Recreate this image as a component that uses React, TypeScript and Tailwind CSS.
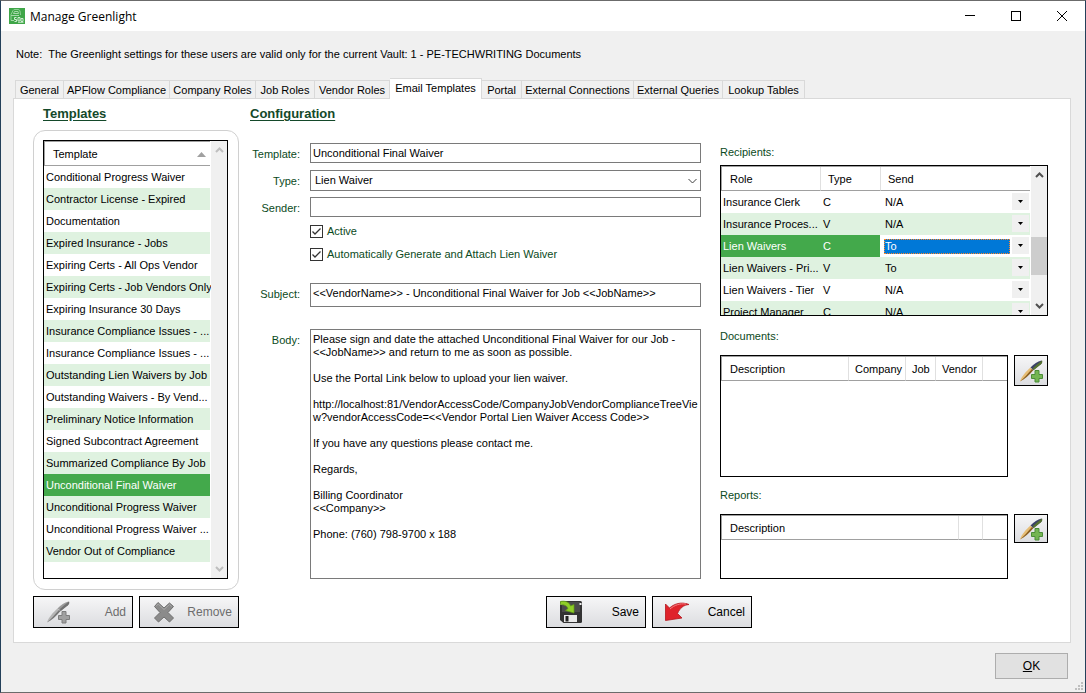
import { useState, type ReactNode } from "react";

const TABS = [
  { label: "General", width: "w-[49px]" },
  { label: "APFlow Compliance", width: "w-[106px]" },
  { label: "Company Roles", width: "w-[86px]" },
  { label: "Job Roles", width: "w-[59px]" },
  { label: "Vendor Roles", width: "w-[75px]" },
  { label: "Email Templates", width: "w-[92px]" },
  { label: "Portal", width: "w-[40px]" },
  { label: "External Connections", width: "w-[112px]" },
  { label: "External Queries", width: "w-[89px]" },
  { label: "Lookup Tables", width: "w-[82px]" },
];

const TEMPLATES = [
  "Conditional Progress Waiver",
  "Contractor License - Expired",
  "Documentation",
  "Expired Insurance - Jobs",
  "Expiring Certs - All Ops Vendor",
  "Expiring Certs - Job Vendors Only",
  "Expiring Insurance 30 Days",
  "Insurance Compliance Issues - ...",
  "Insurance Compliance Issues - ...",
  "Outstanding Lien Waivers by Job",
  "Outstanding Waivers - By Vend...",
  "Preliminary Notice Information",
  "Signed Subcontract Agreement",
  "Summarized Compliance By Job",
  "Unconditional Final Waiver",
  "Unconditional Progress Waiver",
  "Unconditional Progress Waiver ...",
  "Vendor Out of Compliance",
];

const RECIPIENTS = [
  { role: "Insurance Clerk", type: "C", send: "N/A" },
  { role: "Insurance Proces...", type: "V", send: "N/A" },
  { role: "Lien Waivers", type: "C", send: "To" },
  { role: "Lien Waivers - Pri...", type: "V", send: "To" },
  { role: "Lien Waivers - Tier", type: "V", send: "N/A" },
  { role: "Project Manager", type: "C", send: "N/A" },
];

const BODY = `Please sign and date the attached Unconditional Final Waiver for our Job -
<<JobName>> and return to me as soon as possible.

Use the Portal Link below to upload your lien waiver.

http://localhost:81/VendorAccessCode/CompanyJobVendorComplianceTreeView?vendorAccessCode=<<Vendor Portal Lien Waiver Access Code>>

If you have any questions please contact me.

Regards,

Billing Coordinator
<<Company>>

Phone: (760) 798-9700 x 188`;

function AppIcon() {
  return (
    <svg className="h-4 w-4" viewBox="0 0 16 16" fill="none">
      <rect width="16" height="16" fill="#3fa648" />
      <path d="M2 12.500V6.500L4 2.500Q4.500 1.500 6 1.500h3q1.500 0 2 1.500l.5 4" stroke="#8fd096" />
      <path d="M4.500 5.500h5l-.5-2H5.500zM2 7.500h8M2 12.500h3" stroke="#a6d9aa" />
      <path d="M7.500 9.500h-2v2h2v2h-2M9 9.500h2v3.500H9zM12 10.500h2v3h-2z" stroke="#cdebd0" />
      <path d="M9 14.500h5.500" stroke="#a6d9aa" />
    </svg>
  );
}

// Pen with a plus badge; the disabled version is drawn in greys
function PenPlusIcon({ muted = false }: { muted?: boolean }) {
  return (
    <svg className="h-6 w-6 shrink-0" viewBox="0 0 24 24">
      <path d="M1 22.500C2.500 17.500 7 12.500 11.500 8.500l2.500 2.500C9.500 15.500 5.500 20 1 22.500z" fill={muted ? "#b5b5b5" : "#e6bd75"} />
      <path d="M1 22.500C5 19 9 14.500 13 10l1.500 1C10 16 5.500 20.500 1 22.500z" fill={muted ? "#777777" : "#8a5f22"} />
      <path d="M11.500 8.500C15 4.800 18.500 2.500 22.500 1.500c1 1 .5 2.500-.5 3.500l-7.500 6z" fill={muted ? "#9a9a9a" : "#3b4166"} />
      <path d="M14 9C17 6 20 3.500 23 1.500c.8 1.200 0 2.700-1 3.700l-7.500 6z" fill={muted ? "#717171" : "#56722f"} />
      <path
        d="M16 11.500h4v4h3.500v4H20V23h-4v-3.500h-3.500v-4H16z"
        fill={muted ? "#a0a0a0" : "#74b552"}
        stroke={muted ? "#7d7d7d" : "#4b8d38"}
      />
    </svg>
  );
}

function RemoveIcon() {
  return (
    <svg className="h-6 w-6" viewBox="0 0 24 24">
      <path
        d="M2.500 6.500L6 2.500 12 8l5.500-5 4 3.500L16 12.500l5.500 5.500-4 4L12 17l-5.500 5-4-4L8 12.500z"
        fill="#8b8b8b"
        stroke="#6f6f6f"
        strokeLinejoin="round"
      />
      <path d="M4 6.300L6.200 4l5.800 5.500L17.500 4.500l2.300 2" stroke="#ababab" fill="none" />
    </svg>
  );
}

function SaveIcon() {
  return (
    <svg className="h-6 w-6" viewBox="0 0 24 24">
      <path d="M1 2.500Q1 1 2.500 1h19Q23 1 23 2.500v19q0 1.500-1.500 1.500h-17L1 20z" fill="#333333" />
      <path d="M3 2h18v10H3z" fill="#4b4b4b" />
      <path d="M1.500 3h2v2h-2zM20.500 3h2v2h-2z" fill="#eeeeee" />
      <path d="M5 15h13v7H5z" fill="#e9e9e9" />
      <path d="M6.500 16h3v5.500h-3z" fill="#222222" />
      <path d="M1.500 1.500C6 .5 10.500 2 11.500 6l3.500-1.500v8.500L6.500 10.500l2.500-2C8 5.500 5 4.500 1.500 4.500z" fill="#8fce28" stroke="#5f9c12" strokeWidth=".7" />
    </svg>
  );
}

function CancelIcon() {
  return (
    <svg className="h-6 w-6" viewBox="0 0 24 24">
      <path
        d="M.500 4l4 4C9 4 16 1.300 24 4.500 18.500 5 15 8 12.500 13.500l4.500 4.500L.500 20.500z"
        fill="#df232b"
        stroke="#b3161d"
        strokeWidth=".8"
        strokeLinejoin="round"
      />
      <path d="M5 9C9.500 5 15 3.200 21 4" stroke="#f58085" fill="none" />
    </svg>
  );
}

function Chevron({ up = false }: { up?: boolean }) {
  return (
    <svg width="9" height="6" viewBox="0 0 9 6" fill="none" stroke="currentColor" strokeWidth="2">
      <path d={up ? "M1 5l3.500-3.500L8 5" : "M1 1l3.500 3.500L8 1"} />
    </svg>
  );
}

function ScrollBar({ enabled = false }: { enabled?: boolean }) {
  const color = enabled ? "text-[#505050]" : "text-[#bfbfbf]";
  return (
    <div className="flex w-4 shrink-0 flex-col bg-[#f0f0f0]">
      <button type="button" aria-label="Scroll up" className={`flex h-[18px] items-center justify-center ${color}`}>
        <Chevron up />
      </button>
      <div className="flex-[54]" />
      {enabled && <div className="h-[38px] bg-[#cdcdcd]" />}
      <div className="flex-[23]" />
      <button type="button" aria-label="Scroll down" className={`flex h-[18px] items-center justify-center ${color}`}>
        <Chevron />
      </button>
    </div>
  );
}

function Th({ children, className = "" }: { children?: ReactNode; className?: string }) {
  return (
    <th
      scope="col"
      className={`h-6 border-b border-l border-b-[#a0a0a0] border-l-[#e0e0e0] bg-white p-0 pt-px text-left font-normal first:border-l-[#a0a0a0] ${className}`}
    >
      {children}
    </th>
  );
}

function BigButton({ icon, children, disabled = false }: { icon: ReactNode; children: ReactNode; disabled?: boolean }) {
  return (
    <button
      type="button"
      disabled={disabled}
      className="flex h-8 w-[100px] items-center justify-between border border-black bg-linear-to-b from-[#f6f6f7] to-[#dcdde0] pr-1.5 pl-3 text-[12px] disabled:text-[#6d6d6d]"
    >
      {icon}
      <span>{children}</span>
    </button>
  );
}

function FieldLabel({ htmlFor, children }: { htmlFor: string; children: ReactNode }) {
  return (
    <label htmlFor={htmlFor} className="w-[50px] shrink-0 pt-[5px] text-right text-[#0b4a22]">
      {children}
    </label>
  );
}

function Check({ label }: { label: string }) {
  return (
    <label className="flex items-center gap-1">
      <span className="relative h-[13px] w-[13px]">
        <input type="checkbox" defaultChecked className="peer block h-[13px] w-[13px] appearance-none border border-[#333333] bg-white" />
        <svg
          className="pointer-events-none absolute top-0 left-0 hidden peer-checked:block"
          width="13"
          height="13"
          fill="none"
          stroke="#333333"
          strokeWidth="1.300"
        >
          <path d="M2.500 6.500l2.500 2.500 5.500-5.500" />
        </svg>
      </span>
      {label}
    </label>
  );
}

function AddRowButton({ label, height }: { label: string; height: string }) {
  return (
    <button
      type="button"
      aria-label={label}
      className={`flex w-[34px] items-center justify-center border border-black bg-linear-to-b from-[#f6f6f7] to-[#dcdde0] ${height}`}
    >
      <PenPlusIcon />
    </button>
  );
}

export default function App() {
  const [tab, setTab] = useState("Email Templates");
  const [selected, setSelected] = useState(14);

  return (
    <div className="flex min-h-screen flex-col border border-[#6b6b6b] border-r-[#24405a] border-l-[#24405a] bg-[#f0f0f0] font-['Liberation_Sans',Arial,sans-serif] text-[11px] leading-[13px] text-black">
      <header className="flex h-[30px] items-center bg-white pl-2">
        <AppIcon />
        <h1 className="ml-[5px] flex-1 font-['Open_Sans','Noto_Sans',sans-serif] text-[12px]">Manage Greenlight</h1>
        <button type="button" aria-label="Minimize" className="flex h-full w-[46px] items-center justify-center">
          <svg width="10" height="10" stroke="currentColor">
            <path d="M0 4.500h10" />
          </svg>
        </button>
        <button type="button" aria-label="Maximize" className="flex h-full w-[46px] items-center justify-center">
          <svg width="10" height="10" fill="none" stroke="currentColor">
            <rect x=".5" y=".5" width="9" height="9" />
          </svg>
        </button>
        <button type="button" aria-label="Close" className="flex h-full w-[46px] items-center justify-center">
          <svg width="10" height="10" stroke="currentColor">
            <path d="M0 0l10 10M10 0L0 10" />
          </svg>
        </button>
      </header>

      <main className="flex flex-1 flex-col px-3">
        <p className="pt-[17px] pl-[3px]">
          Note:&nbsp; The Greenlight settings for these users are valid only for the current Vault: 1 - PE-TECHWRITING Documents
        </p>

        <div role="tablist" className="mt-[17px] flex h-5 items-end pl-0.5">
          {TABS.map(({ label, width }) => (
            <button
              key={label}
              type="button"
              role="tab"
              aria-selected={tab === label}
              onClick={() => setTab(label)}
              className={`shrink-0 border border-b-0 border-[#d9d9d9] whitespace-nowrap not-first:border-l-0 ${width} ${
                tab === label ? "z-10 -mb-px h-[21px] bg-white pb-px" : "h-[18px] pt-px"
              }`}
            >
              {label}
            </button>
          ))}
        </div>

        <section className="mr-0.5 flex flex-col border border-[#d9d9d9] bg-white pt-[7px] pr-[22px] pb-3.5 pl-[19px]">
          <div className="flex">
            <div className="w-[206px] shrink-0">
              <h2 className="pl-2.5 text-[13px] leading-[15px] font-bold text-[#14492a] underline underline-offset-2">Templates</h2>
              <div className="mt-[9px] h-[460px] rounded-[12px] border border-[#d0d0d0] p-[9px]">
                <div className="flex h-[439px] w-[185px] border border-black">
                  <div className="flex-1 border-r border-white">
                    <table className="w-full table-fixed border-separate border-spacing-0 border-t border-t-[#a0a0a0]">
                      <thead>
                        <tr>
                          <Th className="pr-1 pl-2">
                            <span className="flex items-center justify-between">
                              Template
                              <svg width="9" height="5" fill="#a0a0a0">
                                <path d="M0 5L4.500 0 9 5z" />
                              </svg>
                            </span>
                          </Th>
                        </tr>
                      </thead>
                      <tbody>
                        {TEMPLATES.map((name, i) => (
                          <tr
                            key={i}
                            aria-selected={i === selected}
                            onClick={() => setSelected(i)}
                            className="even:bg-[#dff2e0] aria-selected:bg-[#43a94b] aria-selected:text-white"
                          >
                            <td className="h-[22px] p-0 pl-0.5 whitespace-nowrap">{name}</td>
                          </tr>
                        ))}
                      </tbody>
                    </table>
                  </div>
                  <ScrollBar />
                </div>
              </div>
            </div>

            <form className="ml-[11px] min-w-0 flex-1" onSubmit={(e) => e.preventDefault()}>
              <h2 className="text-[13px] leading-[15px] font-bold text-[#14492a] underline underline-offset-2">Configuration</h2>
              <div className="mt-[22px] flex gap-2.5">
                <FieldLabel htmlFor="template">Template:</FieldLabel>
                <input id="template" defaultValue="Unconditional Final Waiver" className="h-5 min-w-0 flex-1 border border-[#7a7a7a] px-0.5" />
              </div>
              <div className="mt-[7px] flex gap-2.5">
                <FieldLabel htmlFor="type">Type:</FieldLabel>
                <div className="relative flex-1">
                  <select id="type" defaultValue="Lien Waiver" className="block h-[21px] w-full appearance-none border border-[#7a7a7a] px-1">
                    <option>Lien Waiver</option>
                    <option>Insurance</option>
                  </select>
                  <svg className="pointer-events-none absolute top-2 right-1" width="9" height="6" fill="none" stroke="#404040">
                    <path d="M.500 1l4 4 4-4" />
                  </svg>
                </div>
              </div>
              <div className="mt-1.5 flex gap-2.5">
                <FieldLabel htmlFor="sender">Sender:</FieldLabel>
                <input id="sender" className="h-5 min-w-0 flex-1 border border-[#7a7a7a] px-0.5" />
              </div>
              <div className="mt-2 ml-[60px] flex flex-col gap-2.5 text-[#0b4a22]">
                <Check label="Active" />
                <Check label="Automatically Generate and Attach Lien Waiver" />
              </div>
              <div className="mt-[22px] flex gap-2.5">
                <FieldLabel htmlFor="subject">Subject:</FieldLabel>
                <input
                  id="subject"
                  defaultValue="<<VendorName>> - Unconditional Final Waiver for Job <<JobName>>"
                  className="h-6 min-w-0 flex-1 border border-[#7a7a7a] px-0.5 pb-1"
                />
              </div>
              <div className="mt-[22px] flex gap-2.5">
                <FieldLabel htmlFor="body">Body:</FieldLabel>
                <textarea
                  id="body"
                  defaultValue={BODY}
                  className="h-[250px] min-w-0 flex-1 resize-none overflow-hidden border border-[#7a7a7a] pt-[3px] pl-0.5 break-all"
                />
              </div>
            </form>

            <div className="ml-[19px] w-[328px] shrink-0 pt-10">
              <h3 className="text-[#0b4a22]">Recipients:</h3>
              <div className="mt-1.5 flex h-[151px] overflow-hidden border border-black">
                <div className="flex-1 overflow-hidden border-r border-white">
                  <table className="w-full table-fixed border-separate border-spacing-0 border-t border-t-[#a0a0a0]">
                    <thead>
                      <tr>
                        <Th className="w-[99px] pl-2">Role</Th>
                        <Th className="w-[60px] pl-[7px]">Type</Th>
                        <Th className="pl-[7px]">Send</Th>
                      </tr>
                    </thead>
                    <tbody>
                      {RECIPIENTS.map(({ role, type, send }, i) => {
                        const active = i === 2;
                        return (
                          <tr key={role} className={active ? "" : "even:bg-[#dff2e0]"}>
                            <td className={`h-[22px] p-0 pl-0.5 whitespace-nowrap ${active ? "bg-[#43a94b] text-white" : ""}`}>{role}</td>
                            <td className={`p-0 pl-[3px] ${active ? "bg-[#43a94b] text-white" : ""}`}>{type}</td>
                            <td className="p-0 pl-1">
                              <div className="relative mr-5">
                                <select
                                  aria-label={`Send to ${role}`}
                                  defaultValue={send}
                                  className={`block h-[15px] w-full appearance-none pl-px ${
                                    active ? "bg-[#0078d7] text-white outline-1 -outline-offset-1 outline-[#ff8728] outline-dotted" : ""
                                  }`}
                                >
                                  <option>N/A</option>
                                  <option>To</option>
                                </select>
                                <span className="pointer-events-none absolute -top-0.5 -right-[19px] flex h-[17px] w-[17px] items-center justify-center bg-[#f0f0f0]">
                                  <svg width="5" height="3">
                                    <path d="M0 0h5L2.500 3z" />
                                  </svg>
                                </span>
                              </div>
                            </td>
                          </tr>
                        );
                      })}
                    </tbody>
                  </table>
                </div>
                <ScrollBar enabled />
              </div>

              <h3 className="mt-3.5 text-[#0b4a22]">Documents:</h3>
              <div className="mt-3 flex items-start gap-1.5">
                <div className="h-[122px] flex-1 border border-black">
                  <table className="w-full table-fixed border-separate border-spacing-0 border-t border-t-[#a0a0a0]">
                    <thead>
                      <tr>
                        <Th className="pl-2">Description</Th>
                        <Th className="w-[57px] pl-1.5">Company</Th>
                        <Th className="w-[30px] pl-1.5">Job</Th>
                        <Th className="w-[47px] pl-1.5">Vendor</Th>
                        <Th className="w-[25px]" />
                      </tr>
                    </thead>
                  </table>
                </div>
                <AddRowButton label="Add document" height="h-[31px]" />
              </div>

              <h3 className="mt-3 text-[#0b4a22]">Reports:</h3>
              <div className="mt-3 flex items-start gap-1.5">
                <div className="h-[65px] flex-1 border border-black">
                  <table className="w-full table-fixed border-separate border-spacing-0 border-t border-t-[#a0a0a0]">
                    <thead>
                      <tr>
                        <Th className="pl-2">Description</Th>
                        <Th className="w-[24px]" />
                        <Th className="w-[25px]" />
                      </tr>
                    </thead>
                  </table>
                </div>
                <AddRowButton label="Add report" height="h-[29px]" />
              </div>
            </div>
          </div>

          <div className="mt-1.5 flex">
            <div className="flex w-[206px] shrink-0 gap-1.5">
              <BigButton icon={<PenPlusIcon muted />} disabled>
                Add
              </BigButton>
              <BigButton icon={<RemoveIcon />} disabled>
                Remove
              </BigButton>
            </div>
            <div className="ml-[11px] flex flex-1 justify-center gap-1.5">
              <BigButton icon={<SaveIcon />}>Save</BigButton>
              <BigButton icon={<CancelIcon />}>Cancel</BigButton>
            </div>
          </div>
        </section>

        <div className="mt-2.5 mr-[5px] flex justify-end">
          <button type="button" className="h-[26px] w-[73px] border border-[#adadad] bg-[#e1e1e1] text-[12px]">
            <span className="underline">O</span>K
          </button>
        </div>
      </main>

      <svg className="mr-0.5 mb-0.5 self-end" width="8" height="8" fill="#bfbfbf">
        <path d="M6 0h2v2H6zM3 3h2v2H3zM6 3h2v2H6zM0 6h2v2H0zM3 6h2v2H3zM6 6h2v2H6z" />
      </svg>
    </div>
  );
}
